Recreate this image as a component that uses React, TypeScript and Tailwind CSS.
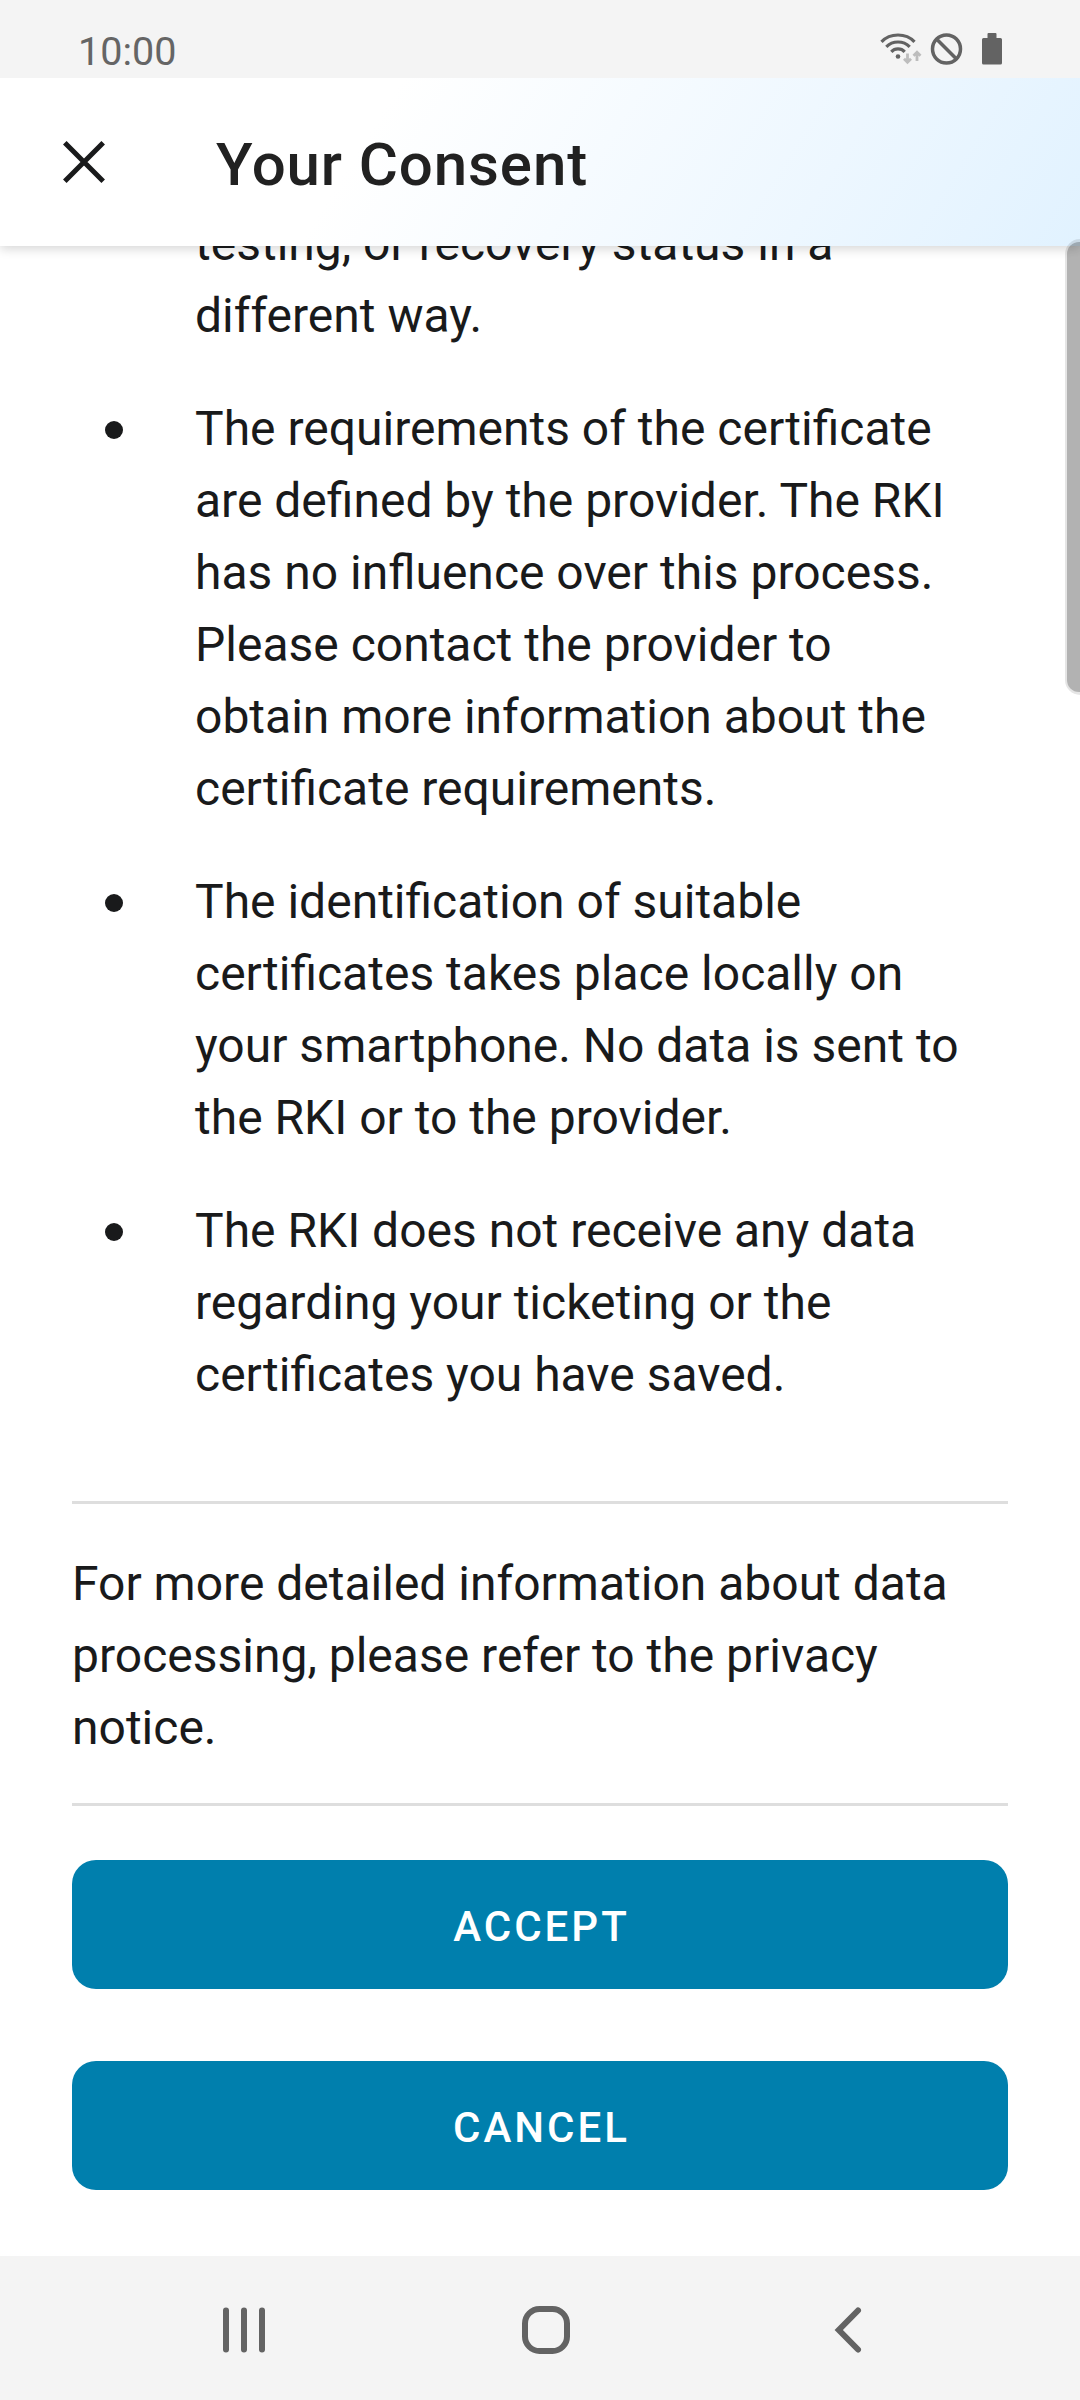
import React from "react";

const items = [
  ["The requirements of the certificate", "are defined by the provider. The RKI", "has no influence over this process.", "Please contact the provider to", "obtain more information about the", "certificate requirements."],
  ["The identification of suitable", "certificates takes place locally on", "your smartphone. No data is sent to", "the RKI or to the provider."],
  ["The RKI does not receive any data", "regarding your ticketing or the", "certificates you have saved."],
];

function Lines({ lines }: { lines: string[] }) {
  return (
    <div>
      {lines.map((l) => (
        <div key={l} className="whitespace-nowrap">{l}</div>
      ))}
    </div>
  );
}

function StatusIcons() {
  return (
    <svg className="mt-[28px] h-[42px] w-[130px] shrink-0" viewBox="875 28 130 42" fill="none" stroke="#636363">
      <g strokeWidth="3.200">
        <path d="M881.500 41.800Q888 35 898 35Q908 35 914.500 41.800" />
        <path d="M886.300 46.800Q891 42 898 42Q905 42 909.700 46.800" />
        <path d="M891.300 51.800Q894 48.900 898 48.900Q902 48.900 904.700 51.800" />
      </g>
      <circle cx="898" cy="56.500" r="2.300" fill="#636363" stroke="none" />
      <g stroke="#bdbdbd" strokeWidth="2.800">
        <path d="M907.500 53.500V62M904 58.800 907.500 62.300 911 58.800" />
        <path d="M917 61V52.500M913.500 55.700 917 52.200 920.500 55.700" />
      </g>
      <circle cx="946.500" cy="49" r="14" strokeWidth="3.500" />
      <path d="M936.500 39 956.500 59" strokeWidth="3.500" />
      <path d="M988.500 33H995.500Q996.500 33 996.500 34V38H1000.500Q1002 38 1002 39.500V63Q1002 64.500 1000.500 64.500H983.500Q982 64.500 982 63V39.500Q982 38 983.500 38H987.500V34Q987.500 33 988.500 33Z" fill="#636363" stroke="none" />
    </svg>
  );
}

export default function App() {
  return (
    <div className="relative flex h-[2400px] w-[1080px] flex-col overflow-hidden bg-white font-['Roboto',sans-serif] text-[#191a1b]">
      <div className="relative z-20 flex h-[78px] shrink-0 items-start justify-between bg-[#f4f4f4] pl-[78px] pr-[75px] text-[#656565]">
        <span className="pt-[32px] text-[39.500px] leading-[39px]">10:00</span>
        <StatusIcons />
      </div>
      <header className="relative z-10 flex h-[168px] shrink-0 items-center bg-[linear-gradient(122deg,#fff_34%,#edf7ff_75%,#e1f2ff_100%)] shadow-[0_3px_10px_rgba(0,0,0,0.16)]">
        <svg className="ml-[60px] size-[48px]" viewBox="0 0 48 48" fill="none" stroke="#191a1b" strokeWidth="5"><path d="M4.800 4.800 43.200 43.200M43.200 4.800 4.800 43.200" /></svg>
        <h1 className="ml-[108px] pt-[6px] text-[60px] font-medium leading-none tracking-[0.9px] text-[#212121]">Your Consent</h1>
      </header>
      <main className="flex h-[2010px] shrink-0 flex-col overflow-hidden px-[72px] text-[48px] leading-[72px]">
        <div className="-mt-[38px] pl-[123px]"><Lines lines={["testing, or recovery status in a", "different way."]} /></div>
        <ul className="mt-[41px] flex flex-col gap-[41px]">
          {items.map((lines) => (
            <li key={lines[0]} className="flex"><span className="ml-[33px] mr-[72px] mt-[28px] size-[18px] rounded-full bg-[#191a1b]" /><Lines lines={lines} /></li>
          ))}
        </ul>
        <hr className="mt-[90px] h-[3px] border-0 bg-[#dedede]" />
        <div className="mt-[44px]"><Lines lines={["For more detailed information about data", "processing, please refer to the privacy", "notice."]} /></div>
        <hr className="mt-[39px] h-[3px] border-0 bg-[#dedede]" />
        <div className="mt-[54px] flex flex-col gap-[72px]">
          {["ACCEPT", "CANCEL"].map((label) => (
            <button key={label} className="flex h-[129px] items-center justify-center rounded-[24px] bg-[#007fad] pl-[3px] pt-[4px] text-[42px] font-medium leading-none tracking-[3px] text-white">{label}</button>
          ))}
        </div>
      </main>
      <nav className="flex h-[144px] shrink-0 items-center bg-[#f4f4f4] pt-[4px]">
        <svg className="ml-[220px] size-[48px]" viewBox="0 0 48 48" stroke="#636363" strokeWidth="6" strokeLinecap="round"><path d="M6 4.500V43.500M24 4.500V43.500M42 4.500V43.500" /></svg>
        <svg className="ml-[254px] size-[48px]" viewBox="0 0 48 48" fill="none" stroke="#636363" strokeWidth="6"><rect x="3" y="3" width="42" height="42" rx="14.500" /></svg>
        <svg className="ml-[253px] size-[48px]" viewBox="0 0 48 48" fill="none" stroke="#636363" strokeWidth="6" strokeLinecap="round"><path d="M35 4.500 15.800 24 35 43.500" /></svg>
      </nav>
      <div className="absolute right-0 top-[239px] z-30 h-[456px] w-[15px] rounded-l-[15px] bg-black/10 pb-[3px] pl-[2px] pt-[3px]">
        <div className="h-full rounded-l-[12px] bg-black/22" />
      </div>
    </div>
  );
}
